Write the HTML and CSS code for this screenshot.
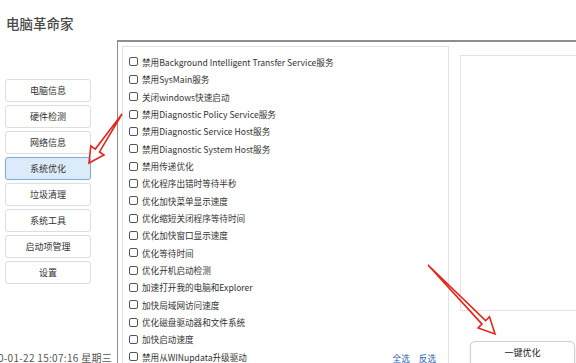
FILE: index.html
```html
<!DOCTYPE html>
<html lang="zh-CN">
<head>
<meta charset="utf-8">
<title>电脑革命家</title>
<link rel="stylesheet" href="styles.css">
</head>
<body>
<div class="app">
  <header class="title">电脑革命家</header>
  <div class="main">
    <aside class="sidebar">
      <div class="nav">
        <button class="nav-btn">电脑信息</button>
        <button class="nav-btn">硬件检测</button>
        <button class="nav-btn">网络信息</button>
        <button class="nav-btn active">系统优化</button>
        <button class="nav-btn">垃圾清理</button>
        <button class="nav-btn">系统工具</button>
        <button class="nav-btn">启动项管理</button>
        <button class="nav-btn">设置</button>
      </div>
      <div class="clock">0-01-22 15:07:16 星期三</div>
    </aside>
    <section class="frame">
      <div class="list">
        <label class="row"><span class="box"></span>禁用Background Intelligent Transfer Service服务</label>
        <label class="row"><span class="box"></span>禁用SysMain服务</label>
        <label class="row"><span class="box"></span>关闭windows快速启动</label>
        <label class="row"><span class="box"></span>禁用Diagnostic Policy Service服务</label>
        <label class="row"><span class="box"></span>禁用Diagnostic Service Host服务</label>
        <label class="row"><span class="box"></span>禁用Diagnostic System Host服务</label>
        <label class="row"><span class="box"></span>禁用传递优化</label>
        <label class="row"><span class="box"></span>优化程序出错时等待半秒</label>
        <label class="row"><span class="box"></span>优化加快菜单显示速度</label>
        <label class="row"><span class="box"></span>优化缩短关闭程序等待时间</label>
        <label class="row"><span class="box"></span>优化加快窗口显示速度</label>
        <label class="row"><span class="box"></span>优化等待时间</label>
        <label class="row"><span class="box"></span>优化开机启动检测</label>
        <label class="row"><span class="box"></span>加速打开我的电脑和Explorer</label>
        <label class="row"><span class="box"></span>加快局域网访问速度</label>
        <label class="row"><span class="box"></span>优化磁盘驱动器和文件系统</label>
        <label class="row"><span class="box"></span>加快启动速度</label>
        <div class="row last"><span class="box"></span>禁用从WINupdata升级驱动<span class="links"><a class="link">全选</a><a class="link">反选</a></span></div>
      </div>
      <div class="side">
        <div class="log"></div>
        <button class="go">一键优化</button>
      </div>
    </section>
  </div>
  <svg class="arrows" width="576" height="363" viewBox="0 0 576 363">
    <polygon points="122,114 99.5,151.9 104,155 89,163 90.8,146 95.3,149.1" />
    <polygon points="428,265 485.6,320.7 489.5,316.8 495,334 478.1,328 482,324.1" />
  </svg>
</div>
</body>
</html>
```
FILE: styles.css
```css
* { box-sizing: border-box; }
html, body {
  margin: 0;
  padding: 0;
  background: #fff;
}
body {
  width: 576px;
  height: 363px;
  overflow: hidden;
  font-family: "Noto Sans CJK SC", "Noto Sans", sans-serif;
  color: #333;
}
.app {
  position: relative;
  width: 576px;
  height: 363px;
  overflow: hidden;
  display: flex;
  flex-direction: column;
}
.title {
  height: 40px;
  padding: 13px 0 0 6px;
  font-size: 13.5px;
  line-height: 20px;
  font-weight: 500;
  color: #4a4a4a;
}
.main {
  flex: 1;
  display: flex;
  min-height: 0;
}
.sidebar {
  width: 117px;
  flex: none;
  padding: 39px 0 0 5px;
  display: flex;
  flex-direction: column;
}
.nav {
  display: flex;
  flex-direction: column;
  gap: 3px;
}
.nav-btn {
  width: 86px;
  height: 23px;
  border: 1px solid #dedede;
  border-radius: 3px;
  background: #fff;
  font-family: inherit;
  font-size: 9px;
  color: #333;
  padding: 0;
}
.nav-btn.active {
  background: #dcebf9;
  border-color: #7eaadb;
}
.clock {
  margin: 68px 0 0 -7px;
  font-size: 10px;
  letter-spacing: 0.3px;
  line-height: 12px;
  color: #555;
  white-space: nowrap;
}
.frame {
  flex: 1;
  display: flex;
  align-items: flex-start;
  border-top: 2px solid #8e8e8e;
  border-left: 1px solid #8e8e8e;
  padding: 4px 0 0 4px;
  min-width: 0;
}
.list {
  width: 327px;
  height: 340px;
  flex: none;
  border: 1px solid #e2e2e2;
  padding: 6.3px 12px 0 6px;
}
.row {
  height: 17.35px;
  display: flex;
  align-items: center;
  font-size: 8.6px;
  color: #333;
  white-space: nowrap;
}
.box {
  width: 9px;
  height: 9px;
  border: 1px solid #555;
  border-radius: 2px;
  background: #fff;
  margin-right: 4px;
  flex: none;
}
.links {
  margin-left: auto;
  display: flex;
  gap: 9px;
  padding-top: 3px;
}
.link {
  color: #2b5fb4;
  font-size: 8.6px;
}
.side {
  flex: 1;
  margin-left: 11px;
  padding-top: 9px;
  display: flex;
  flex-direction: column;
  min-width: 0;
}
.log {
  height: 256px;
  border: 1px solid #e2e2e2;
  border-right: none;
}
.go {
  margin: 30px 0 0 10px;
  width: 105px;
  height: 30px;
  border: 1px solid #d0d0d0;
  border-radius: 5px;
  background: #fff;
  box-shadow: 0 1px 2px rgba(0,0,0,0.12);
  font-family: inherit;
  font-size: 9px;
  color: #222;
  padding: 0 0 8px 0;
}
.arrows {
  position: absolute;
  left: 0;
  top: 0;
  pointer-events: none;
}
.arrows polygon {
  fill: none;
  stroke: #e5261c;
  stroke-width: 1.6;
  stroke-linejoin: miter;
}
```
